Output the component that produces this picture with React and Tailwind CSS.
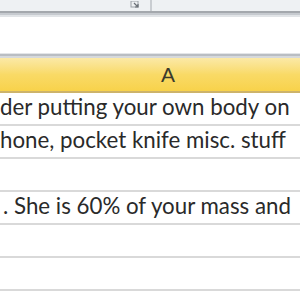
import React from "react";

const rows = [
  { text: "der putting your own body on", ml: "ml-[0px]" },
  { text: "hone, pocket knife misc. stuff", ml: "ml-[0px]" },
  { text: "", ml: "" },
  { text: ". She is 60% of your mass and", ml: "ml-[3px]" },
  { text: "", ml: "" },
  { text: "", ml: "" },
  { text: "", ml: "" },
];

export default function App() {
  return (
    <div className="w-[300px] h-[300px] overflow-hidden bg-white font-['Lato',sans-serif]">
      {/* ribbon bottom */}
      <div className="h-[11px] bg-[#eef1f3] flex">
        <div className="w-[128px]" />
        <div className="w-[12px] h-[9px] flex items-end justify-end">
          <svg width="10" height="8" viewBox="0 0 10 8">
            <rect x="1" y="0" width="7" height="6" fill="none" stroke="#9aa0a6" strokeWidth="1" />
            <path d="M4 2 L8 6 M8 3 L8 6 L5 6" stroke="#6b7177" strokeWidth="1.2" fill="none" />
          </svg>
        </div>
        <div className="w-[10px]" />
        <div className="w-[2px] h-full bg-[#c9cdd1]" />
      </div>
      <div className="h-[2px] bg-[#a4a8ad]" />
      <div className="h-[2px] bg-[#c6cacf]" />
      <div className="h-[2px] bg-[#e1e4e7]" />
      {/* formula bar */}
      <div className="h-[36px] bg-white" />
      <div className="h-[1px] bg-[#e3e5e8]" />
      <div className="h-[2px] bg-[#b9bdc2]" />
      <div className="h-[2px] bg-[#d6d9dc]" />
      {/* column header */}
      <div className="h-[35px] bg-gradient-to-b from-[#fbe9a6] via-[#f9da66] to-[#f8d24a] border-b-2 border-[#cdb36a] flex items-center justify-center">
        <span className="ml-[36px] text-[21px] text-[#3b3a2c] font-['Liberation_Sans',sans-serif]">A</span>
      </div>
      {rows.map((r, i) => (
        <div
          key={i}
          className="h-[33px] border-b-2 border-[#d9d9d9] flex items-center overflow-hidden whitespace-nowrap"
        >
          <span className={`${r.ml} text-[22.3px] text-[#2a2a2a] leading-none -mt-[2px]`}>{r.text}</span>
        </div>
      ))}
    </div>
  );
}
